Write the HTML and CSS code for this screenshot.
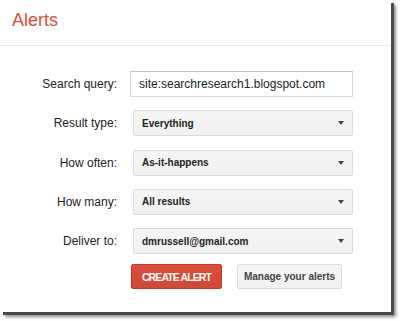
FILE: index.html
```html
<!doctype html>
<html lang="en">
<head>
  <meta charset="UTF-8" />
  <title>Alerts</title>
  <link rel="stylesheet" href="styles.css">
</head>
<body>
  <div class="frame">
    <!-- Header -->
    <div class="header">
      <h1 class="title">Alerts</h1>
    </div>

    <!-- Alert form -->
    <form class="alert-form" action="">
      <div class="form-grid">
        <label class="field-label">Search query:</label>
        <input type="text" class="query-input" value="site:searchresearch1.blogspot.com">

        <label class="field-label">Result type:</label>
        <div class="select"><span>Everything</span><i class="arrow"></i></div>

        <label class="field-label">How often:</label>
        <div class="select"><span>As-it-happens</span><i class="arrow"></i></div>

        <label class="field-label">How many:</label>
        <div class="select"><span>All results</span><i class="arrow"></i></div>

        <label class="field-label">Deliver to:</label>
        <div class="select"><span>dmrussell@gmail.com</span><i class="arrow"></i></div>
      </div>

      <div class="actions">
        <button type="button" class="btn btn-create">CREATE ALERT</button>
        <button type="button" class="btn btn-manage">Manage your alerts</button>
      </div>
    </form>
  </div>
</body>
</html>
```

FILE: styles.css
```css
/* ------------------ Reset & Globals ------------------ */
* {
  margin: 0;
  padding: 0;
  box-sizing: border-box;
}
html, body {
  height: 100%;
}
body {
  font-family: "Liberation Sans", Arial, sans-serif;
  background: #fff;
  color: #222;
}

/* ------------------ Frame ------------------ */
.frame {
  width: 391px;
  height: 312px;
  background: #fff;
  box-shadow: 3px 3px 0 #4a4a4a, 5px 5px 3px rgba(0, 0, 0, 0.45);
}

/* ------------------ Header ------------------ */
.header {
  height: 46px;
  padding: 9px 12px 0;
  border-bottom: 1px solid #ebebeb;
}
.title {
  font-size: 18px;
  font-weight: normal;
  color: #dd4b39;
  line-height: 22px;
}

/* ------------------ Form ------------------ */
.alert-form {
  padding-top: 25px;
}
.form-grid {
  display: grid;
  grid-template-columns: 117px 223px;
  column-gap: 13px;
  row-gap: 13.3px;
  align-items: center;
}
.field-label {
  text-align: right;
  font-size: 12px;
  color: #222;
}
.query-input {
  height: 26px;
  width: 223px;
  padding: 0 8px;
  border: 1px solid #d9d9d9;
  border-top-color: #c0c0c0;
  font-family: inherit;
  font-size: 12px;
  color: #222;
  outline: none;
}
.select {
  height: 26px;
  margin-left: 3px;
  padding: 0 8px;
  display: flex;
  align-items: center;
  justify-content: space-between;
  background: linear-gradient(#f5f5f5, #f1f1f1);
  border: 1px solid #dcdcdc;
  border-radius: 2px;
  font-size: 10px;
  font-weight: bold;
  color: #222;
}
.arrow {
  width: 0;
  height: 0;
  border-left: 3.5px solid transparent;
  border-right: 3.5px solid transparent;
  border-top: 4px solid #444;
}

/* ------------------ Buttons ------------------ */
.actions {
  display: flex;
  gap: 15px;
  margin: 10px 0 0 131px;
}
.btn {
  height: 25px;
  border-radius: 2px;
  font-family: inherit;
  font-weight: bold;
  cursor: pointer;
}
.btn-create {
  width: 91px;
  background: linear-gradient(#dd4b39, #d14836);
  border: 1px solid #c53727;
  color: #fff;
  font-size: 10.5px;
  letter-spacing: -0.9px;
}
.btn-manage {
  width: 105px;
  background: linear-gradient(#f5f5f5, #f1f1f1);
  border: 1px solid #dcdcdc;
  color: #444;
  font-size: 10px;
}
```
